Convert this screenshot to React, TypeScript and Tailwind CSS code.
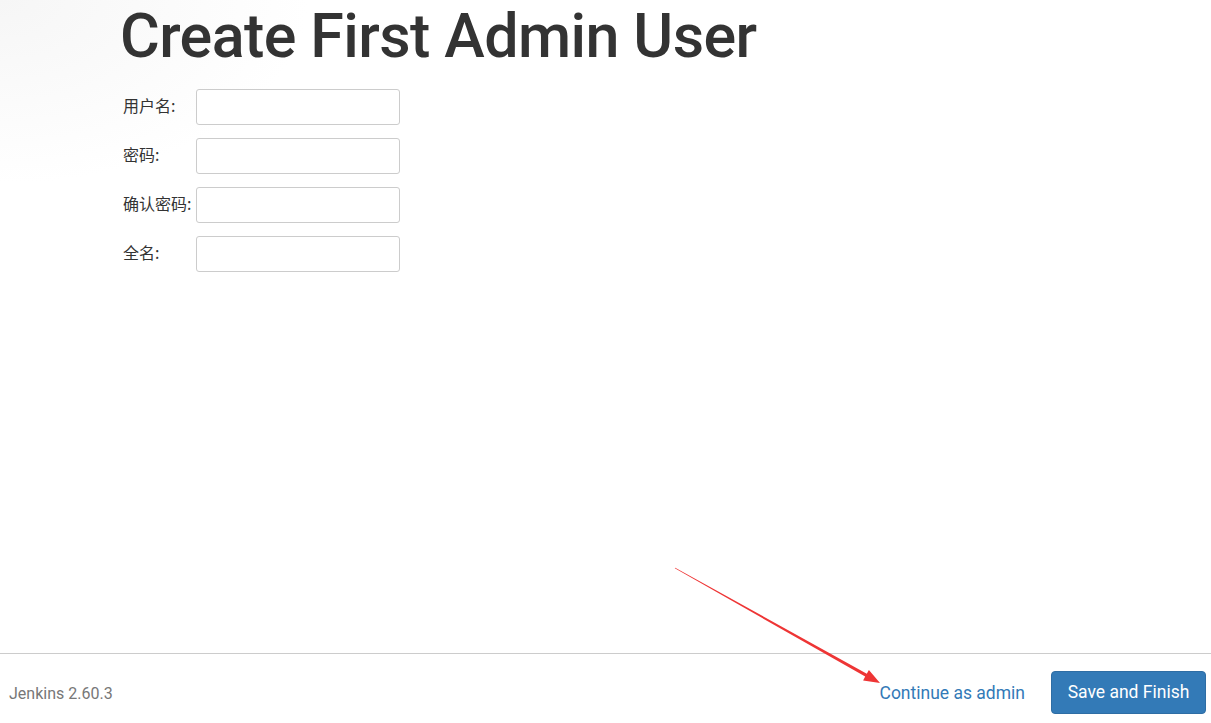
import React from 'react';

const fields = ['用户名', '密码', '确认密码', '全名'];

export default function App() {
  return (
    <div className="relative h-screen w-full flex flex-col bg-white bg-[radial-gradient(ellipse_at_top_left,#f6f6f6_0%,#ffffff_18%)] font-['Roboto','Liberation_Sans',sans-serif] text-[#333]">
      {/* Content */}
      <div className="flex-1 pl-[120px]">
        <h1 className="mt-[2px] text-[61px] leading-[68px] font-medium text-[#333] tracking-[-0.6px]">
          Create First Admin User
        </h1>
        <div className="mt-[19px] flex flex-col gap-[13px] pl-[3px]">
          {fields.map((label) => (
            <div key={label} className="flex items-center">
              <label className="w-[73px] -mt-[4px] text-[16px] leading-5 text-[#333] font-['Noto_Sans_CJK_SC','Microsoft_YaHei',sans-serif]">
                {label}:
              </label>
              <input
                type="text"
                className="w-[204px] h-[36px] border border-[#ccc] rounded-[3px] bg-white px-2 text-sm outline-none"
              />
            </div>
          ))}
        </div>
      </div>

      {/* Footer */}
      <div className="h-[70px] border-t border-[#ccc] flex items-center justify-between pl-[9px] pr-[5px]">
        <span className="text-[16px] text-[#777] pt-[10px]">Jenkins 2.60.3</span>
        <div className="flex items-center gap-[26px] pt-[8px]">
          <a href="#" className="text-[17.5px] text-[#337ab7] pt-[2px]">
            Continue as admin
          </a>
          <button className="w-[155px] h-[43px] rounded-[4px] bg-[#337ab7] text-white text-[17.5px] border border-[#2e6da4]">
            Save and Finish
          </button>
        </div>
      </div>

      {/* Annotation arrow */}
      <svg className="absolute inset-0 pointer-events-none" width="1211" height="723" viewBox="0 0 1211 723">
        <polygon
          points="675.2,567.65 866.8,673.8 868.9,670 880,683 863.1,680.4 865.2,676.6 674.8,568.35"
          fill="#ee3535"
        />
      </svg>
    </div>
  );
}
